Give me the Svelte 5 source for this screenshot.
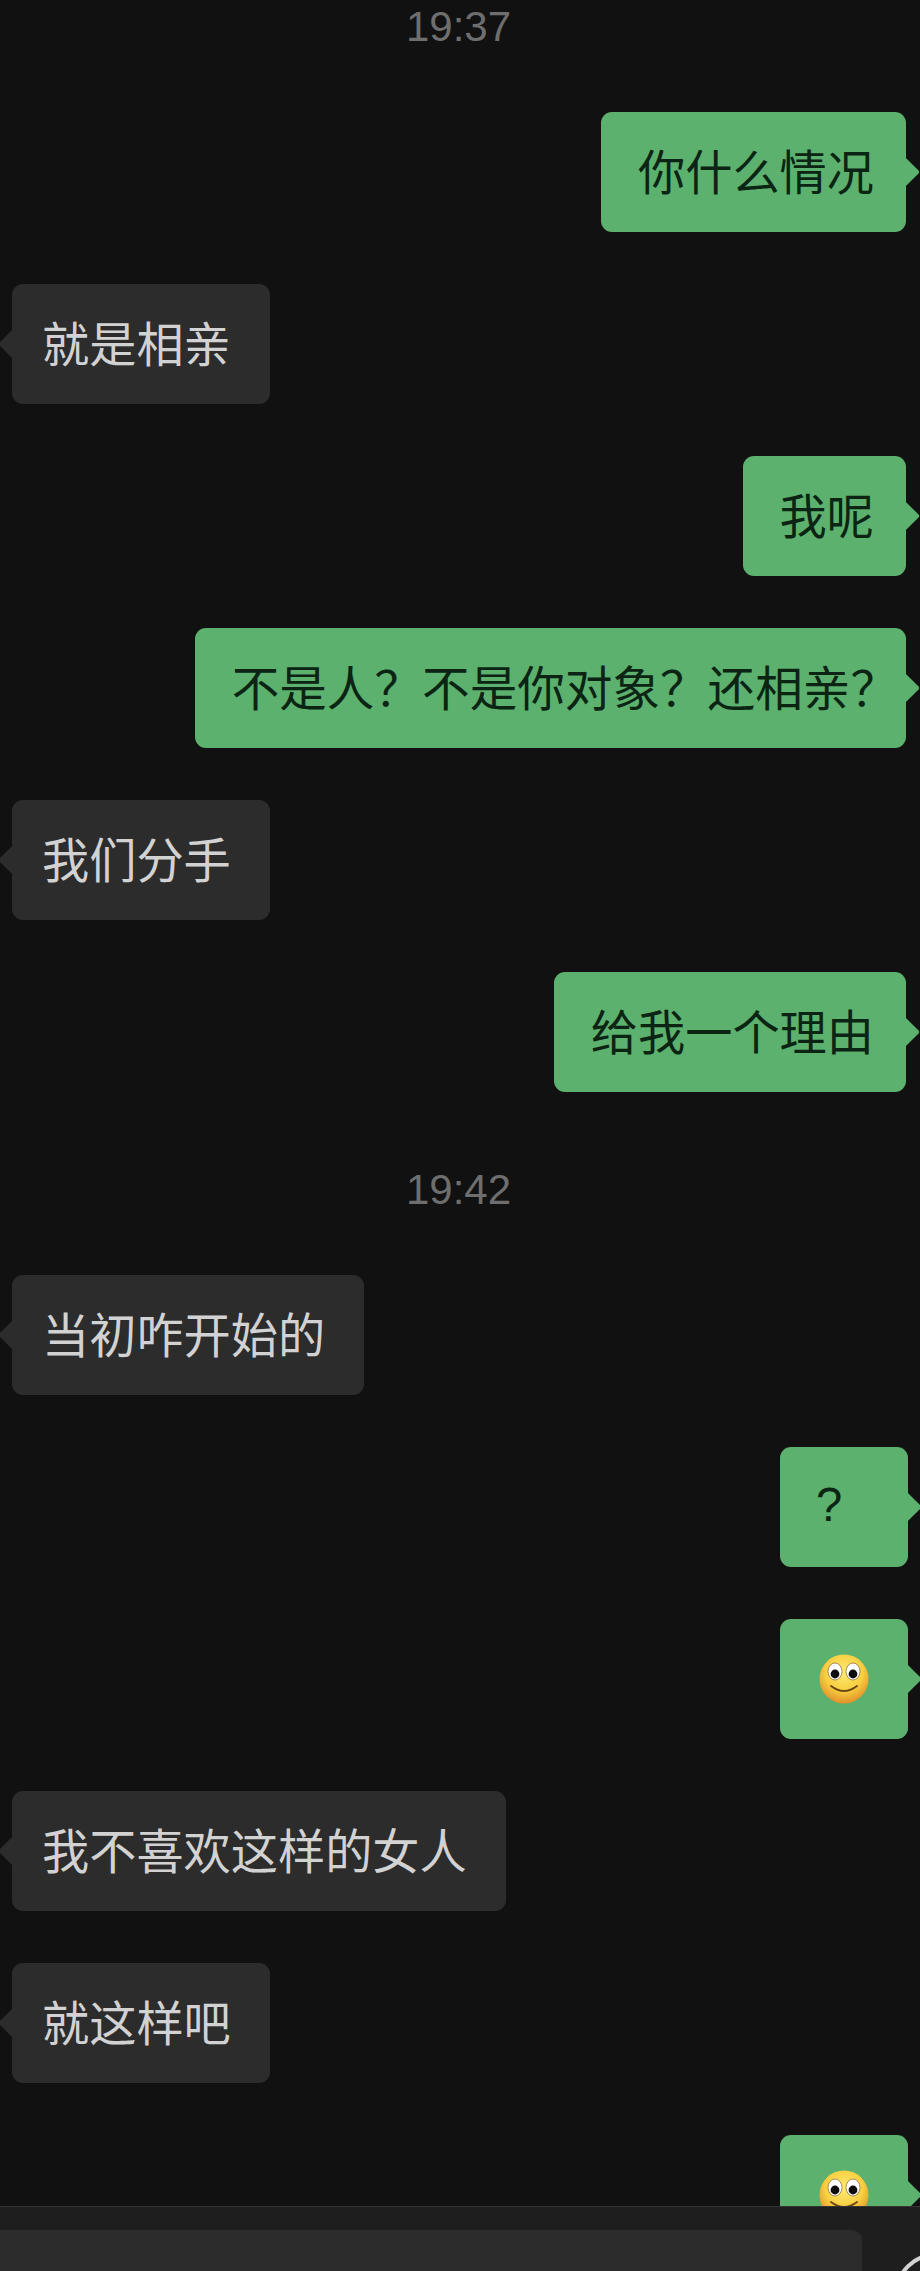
<script>
  const items = [
    { time: '19:37' },
    { side: 'me', text: '你什么情况' },
    { side: 'them', text: '就是相亲' },
    { side: 'me', text: '我呢' },
    { side: 'me', text: '不是人？不是你对象？还相亲？', long: true },
    { side: 'them', text: '我们分手' },
    { side: 'me', text: '给我一个理由' },
    { time: '19:42' },
    { side: 'them', text: '当初咋开始的' },
    { side: 'me', text: '?' },
    { side: 'me', smile: true },
    { side: 'them', text: '我不喜欢这样的女人' },
    { side: 'them', text: '就这样吧' },
    { side: 'me', smile: true }
  ];
</script>

<div class="page">
  <div class="chat">
    {#each items as item, i}
      {#if item.time}
        <div class="time" class:first={i === 0}>{item.time}</div>
      {:else}
        <div class="row {item.side}">
          <div class="bubble" class:long={item.long} class:short={item.smile || item.text === '?'}>
            {#if item.smile}
              <svg class="smile" viewBox="0 0 50 50" role="img" aria-label="smile">
                <defs>
                  <radialGradient id="face{i}" cx="50%" cy="36%" r="64%">
                    <stop offset="0" stop-color="#fdeb72" />
                    <stop offset="0.6" stop-color="#f8cf40" />
                    <stop offset="1" stop-color="#e0912a" />
                  </radialGradient>
                </defs>
                <circle cx="25" cy="25" r="24.5" fill="url(#face{i})" />
                <ellipse cx="16" cy="17.5" rx="7" ry="8.5" fill="#fff" stroke="#8f7136" stroke-width="0.8" />
                <ellipse cx="34" cy="17.5" rx="7" ry="8.5" fill="#fff" stroke="#8f7136" stroke-width="0.8" />
                <circle cx="16" cy="20" r="4.4" fill="#0e0e0e" />
                <circle cx="34" cy="20" r="4.4" fill="#0e0e0e" />
                <path d="M12 32 Q25 42 38 32" fill="none" stroke="#6e4a12" stroke-width="2" stroke-linecap="round" />
              </svg>
            {:else}
              {item.text}
            {/if}
          </div>
        </div>
      {/if}
    {/each}
  </div>
  <div class="footer">
    <div class="input"></div>
    <div class="round"></div>
  </div>
</div>

<style>
  :global(body) {
    background: #111111;
  }

  .page {
    width: 920px;
    height: 2271px;
    display: flex;
    flex-direction: column;
    overflow: hidden;
    background: #111111;
    font-family: "Noto Sans CJK SC", "Liberation Sans", sans-serif;
  }

  .chat {
    height: 2206px;
    flex: none;
    overflow: hidden;
    display: flex;
    flex-direction: column;
  }

  .time {
    height: 54px;
    line-height: 54px;
    margin: 71px 0 6px;
    padding-right: 3px;
    text-align: center;
    font-family: "Liberation Sans", sans-serif;
    font-size: 42px;
    color: #6e6e6e;
  }

  .time.first {
    margin: 0 0 6px;
  }

  .row {
    display: flex;
    margin-top: 52px;
  }

  .row.me {
    justify-content: flex-end;
    padding-right: 14px;
  }

  .row.them {
    justify-content: flex-start;
    padding-left: 12px;
  }

  .bubble {
    position: relative;
    height: 120px;
    box-sizing: border-box;
    padding: 0 32px 6px 37px;
    display: flex;
    align-items: center;
    font-size: 47.2px;
    border-radius: 11px;
    white-space: nowrap;
  }

  .bubble::after {
    content: '';
    position: absolute;
    top: 50%;
    width: 24px;
    height: 24px;
    margin-top: -12px;
    transform: rotate(45deg);
    background: inherit;
    border-radius: 2px;
  }

  .me .bubble {
    background: #5bb16d;
    color: #0b2413;
  }

  .me .bubble::after {
    right: -9px;
  }

  .them .bubble {
    background: #2c2c2c;
    color: #d2d2d2;
    padding: 0 39px 6px 30px;
  }

  .them .bubble::after {
    left: -9px;
  }

  .bubble.long {
    font-size: 47.6px;
    padding-right: 8px;
  }

  .bubble.short {
    width: 128px;
    margin-right: -2px;
    padding-left: 36px;
    font-family: "Liberation Sans", sans-serif;
  }

  .smile {
    width: 50px;
    height: 50px;
    flex: none;
    margin: 6px 0 0 3px;
  }

  .footer {
    flex: 1;
    display: flex;
    align-items: flex-start;
    gap: 33px;
    padding-top: 23px;
    background: #1e1e1e;
    border-top: 1px solid #343434;
    overflow: hidden;
  }

  .input {
    width: 862px;
    height: 60px;
    flex: none;
    background: #2c2c2c;
    border-top-right-radius: 10px;
  }

  .round {
    width: 80px;
    height: 80px;
    flex: none;
    margin-top: 23px;
    box-sizing: border-box;
    border: 4px solid #d2d2d2;
    border-radius: 50%;
  }
</style>
